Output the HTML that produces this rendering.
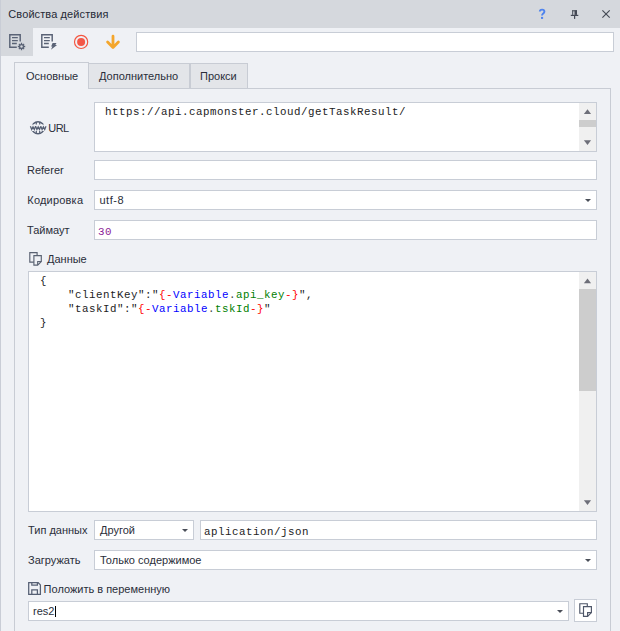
<!DOCTYPE html>
<html><head><meta charset="utf-8">
<style>
*{margin:0;padding:0;box-sizing:border-box}
html,body{width:620px;height:631px;overflow:hidden}
body{background:#eff1f5;font-family:"Liberation Sans",sans-serif;font-size:11px;color:#2a2e3a;position:relative}
.a{position:absolute}
.t{position:absolute;white-space:pre;line-height:14px}
.in{position:absolute;background:#fff;border:1px solid #c8cdd6}
.mono{font-family:"Liberation Mono",monospace;font-size:10.8px;letter-spacing:0.52px}
.arr{position:absolute;width:0;height:0;border-left:3px solid transparent;border-right:3px solid transparent;border-top:3px solid #4a4e58}
.sb{position:absolute;background:#f0f0f0}
</style></head><body>
<!-- left border -->
<div class="a" style="left:0;top:0;width:1px;height:631px;background:#c9cdd6"></div>
<!-- title bar -->
<div class="a" style="left:1px;top:0;width:619px;height:28px;background:#d5d8dd"></div>
<div class="t" style="left:8.3px;top:7px;font-size:11px;color:#262a36;letter-spacing:0.1px">Свойства действия</div>
<svg class="a" style="left:534px;top:6px" width="16" height="16" viewBox="534 6 16 16">
<path d="M539.8 11.6C539.8 10.2 540.9 9.6 542.1 9.6C543.4 9.6 544.4 10.4 544.4 11.6C544.4 12.9 543.4 13.3 542.8 13.9C542.2 14.5 542 15 542 15.6" fill="none" stroke="#4f84ee" stroke-width="1.9"/>
<rect x="541" y="16.9" width="2.1" height="2" fill="#4f84ee"/>
</svg>
<!-- pin -->
<svg class="a" style="left:568px;top:8px" width="13" height="13" viewBox="568 8 13 13">
<g fill="#444954">
<rect x="572.2" y="10.3" width="4.8" height="1"/>
<rect x="572.2" y="10.3" width="1" height="4.6"/>
<rect x="574.5" y="10.3" width="2.5" height="4.6"/>
<rect x="570.8" y="14.8" width="7.5" height="1.2"/>
<rect x="574" y="15.5" width="1.2" height="3.4"/>
</g>
</svg>
<!-- close -->
<svg class="a" style="left:600px;top:8px" width="13" height="13" viewBox="600 8 13 13">
<path d="M602.4 10.3L609.7 17.6M609.7 10.3L602.4 17.6" stroke="#464b55" stroke-width="1.15" fill="none"/>
</svg>

<!-- toolbar -->
<div class="a" style="left:1px;top:28px;width:32px;height:28px;background:#d5d8dd"></div>
<svg class="a" style="left:0;top:28px" width="64" height="28" viewBox="0 28 64 28">
<g fill="none" stroke="#5a6376" stroke-width="1.45">
<path d="M20.2 41.5V34.8H9.8V47.2H16.8"/>
<path d="M12 37.6h5.8M12 40.6h5.8M12 43.5h4.8"/>
<path d="M52.2 41.5V34.8H41.8V47.2H48.8"/>
<path d="M44 37.6h5.8M44 40.6h5.8M44 43.5h4.8"/>
</g>
<g fill="#5a6376">
<circle cx="21.5" cy="46.5" r="2.6"/>
<path d="M21.5 42.8v7.4M17.8 46.5h7.4M18.9 43.9l5.2 5.2M24.1 43.9l-5.2 5.2" stroke="#5a6376" stroke-width="1.3"/>
<circle cx="21.5" cy="46.5" r="1.2" fill="#d5d8dd"/>
<path d="M52.6 42.9H56.5L55.3 44.9H57.1L50.9 49.7L52.4 46.5H51.1Z"/>
</g>
</svg>
<svg class="a" style="left:70px;top:30px" width="60" height="24" viewBox="70 30 60 24">
<circle cx="81.1" cy="41.9" r="6.6" fill="none" stroke="#f4553f" stroke-width="1.15"/>
<circle cx="81.1" cy="41.9" r="4" fill="#f35848"/>
<path d="M113 36.2v11M107.6 42.1l5.4 5.4 5.4-5.4" fill="none" stroke="#f4a62c" stroke-width="2.8" stroke-linecap="round" stroke-linejoin="round"/>
</svg>
<div class="in" style="left:136px;top:32px;width:478px;height:20px"></div>

<!-- tabs -->
<div class="a" style="left:14px;top:88px;width:597px;height:560px;border:1px solid #c8ccd4;background:#eff1f5"></div>
<div class="a" style="left:88px;top:63px;width:102px;height:26px;border:1px solid #c8ccd4;background:#e3e5e9"></div>
<div class="a" style="left:190px;top:63px;width:58px;height:26px;border:1px solid #c8ccd4;background:#e3e5e9"></div>
<div class="a" style="left:14px;top:62px;width:75px;height:27px;border:1px solid #c8ccd4;border-bottom:none;background:#eff1f5"></div>
<div class="t" style="left:26px;top:69px">Основные</div>
<div class="t" style="left:99px;top:69px">Дополнительно</div>
<div class="t" style="left:200px;top:69px">Прокси</div>


<!-- URL row -->
<svg class="a" style="left:28px;top:118px" width="20" height="19" viewBox="28 118 20 19">
<defs><clipPath id="ct"><rect x="28" y="118" width="20" height="6.6"/></clipPath><clipPath id="cb"><rect x="28" y="131" width="20" height="6"/></clipPath></defs>
<circle cx="38" cy="127.8" r="6.05" fill="none" stroke="#566074" stroke-width="1.5" clip-path="url(#ct)"/>
<circle cx="38" cy="127.8" r="6.05" fill="none" stroke="#566074" stroke-width="1.5" clip-path="url(#cb)"/>
<path d="M36.3 124.6V122M39.7 124.6V122M36.3 131V133.6M39.7 131V133.6" stroke="#566074" stroke-width="1.2"/>
<path d="M30.40 126.20 L31.70 129.40 L33.00 126.90 L34.30 129.40 L35.60 126.20 M35.60 126.20 L36.90 129.40 L38.20 126.90 L39.50 129.40 L40.80 126.20 M40.80 126.20 L42.10 129.40 L43.40 126.90 L44.70 129.40 L46.00 126.20" fill="none" stroke="#566074" stroke-width="1.25" stroke-linejoin="miter" stroke-miterlimit="3"/>
</svg>
<div class="t" style="left:48.3px;top:121px;letter-spacing:-0.6px">URL</div>
<div class="in" style="left:94px;top:102px;width:503px;height:50px"></div>
<div class="t mono" style="left:105px;top:105px;color:#222">https://api.capmonster.cloud/getTaskResult/</div>
<div class="sb" style="left:579px;top:103px;width:17px;height:48px"></div>
<div class="a" style="left:579px;top:120px;width:17px;height:7px;background:#cdcdcd"></div>

<!-- Referer -->
<div class="t" style="left:27px;top:163px">Referer</div>
<div class="in" style="left:94px;top:160px;width:503px;height:20px"></div>

<!-- Кодировка -->
<div class="t" style="left:27.3px;top:193px;letter-spacing:0.2px">Кодировка</div>
<div class="in" style="left:94px;top:190px;width:503px;height:20px"></div>
<div class="t" style="left:99.5px;top:193px;letter-spacing:0.5px">utf-8</div>
<div class="arr" style="left:585px;top:199px"></div>

<!-- Таймаут -->
<div class="t" style="left:27px;top:223px">Таймаут</div>
<div class="in" style="left:94px;top:220px;width:503px;height:20px"></div>
<div class="t mono" style="left:98px;top:225px;color:#8a1a96">30</div>

<!-- Данные -->
<svg class="a" style="left:26px;top:249px" width="20" height="20" viewBox="26 249 20 20">
<g fill="none" stroke="#5a6272" stroke-width="1.15">
<path d="M33.9 262.1H29.8V252.6H37.1V255.6"/>
<path d="M33.9 255.6H41.3V261.5L37.699999999999996 265.1H33.9Z"/>
<path d="M37.699999999999996 265.1V261.5H41.3"/>
</g>
</svg>
<div class="t" style="left:47px;top:252px">Данные</div>
<div class="in" style="left:28px;top:271px;width:569px;height:241px"></div>
<div class="t mono" style="left:40px;top:274px;color:#222">{
    "clientKey":"<span style="color:#ff0000">{-</span><span style="color:#0000ff">Variable</span><span style="color:#444">.</span><span style="color:#008000">api_key</span><span style="color:#ff0000">-}</span>",
    "taskId":"<span style="color:#ff0000">{-</span><span style="color:#0000ff">Variable</span><span style="color:#444">.</span><span style="color:#008000">tskId</span><span style="color:#ff0000">-}</span>"
}</div>
<div class="sb" style="left:579px;top:272px;width:17px;height:239px"></div>
<div class="a" style="left:579px;top:289px;width:17px;height:102px;background:#cdcdcd"></div>

<!-- Тип данных -->
<div class="t" style="left:28px;top:523px">Тип данных</div>
<div class="in" style="left:94px;top:520px;width:100px;height:20px"></div>
<div class="t" style="left:100px;top:523px">Другой</div>
<div class="arr" style="left:182px;top:529px"></div>
<div class="in" style="left:200px;top:520px;width:397px;height:20px"></div>
<div class="t mono" style="left:204px;top:525px;color:#222">aplication/json</div>

<!-- Загружать -->
<div class="t" style="left:28px;top:553px">Загружать</div>
<div class="in" style="left:94px;top:550px;width:503px;height:20px"></div>
<div class="t" style="left:100px;top:553px">Только содержимое</div>
<div class="arr" style="left:585px;top:559px"></div>

<!-- Положить -->
<svg class="a" style="left:24px;top:578px" width="22" height="20" viewBox="24 578 22 20">
<g fill="none" stroke="#566074" stroke-width="1.25">
<path d="M28.7 582.7H38.2L40.4 584.9V594.3H28.7Z"/>
<path d="M31.8 582.7V585H37.4V582.7"/>
<path d="M31.8 594.3V589.8H37.4V594.3"/>
</g>
</svg>
<div class="t" style="left:43.6px;top:582px">Положить в переменную</div>
<div class="in" style="left:28px;top:601px;width:541px;height:20px"></div>
<div class="t" style="left:33px;top:604px">res2</div>
<div class="a" style="left:55px;top:606px;width:1px;height:11px;background:#000"></div>
<div class="arr" style="left:557px;top:610px"></div>
<div class="a" style="left:574px;top:599px;width:23px;height:23px;border:1px solid #c8cdd6;background:#fff"></div>
<svg class="a" style="left:576px;top:601px" width="20" height="20" viewBox="576 601 20 20">
<g fill="none" stroke="#4e5668" stroke-width="1.15">
<path d="M583.5 613.2H579.8V603.7H587.3V606.6"/>
<path d="M583.5 606.6H591.4V612.6L587.6 616.4H583.5Z"/>
<path d="M587.6 616.4V612.6H591.4"/>
</g>
</svg>
<svg class="a" style="left:0;top:0" width="620" height="631" viewBox="0 0 620 631" fill="#6d6e78">
<path d="M583.9 114H591.1L587.5 109.3Z"/>
<path d="M583.9 140.2H591.1L587.5 144.9Z"/>
<path d="M583.9 283.2H591.1L587.5 278.5Z"/>
<path d="M583.9 500.2H591.1L587.5 504.9Z"/>
</svg>
</body></html>
